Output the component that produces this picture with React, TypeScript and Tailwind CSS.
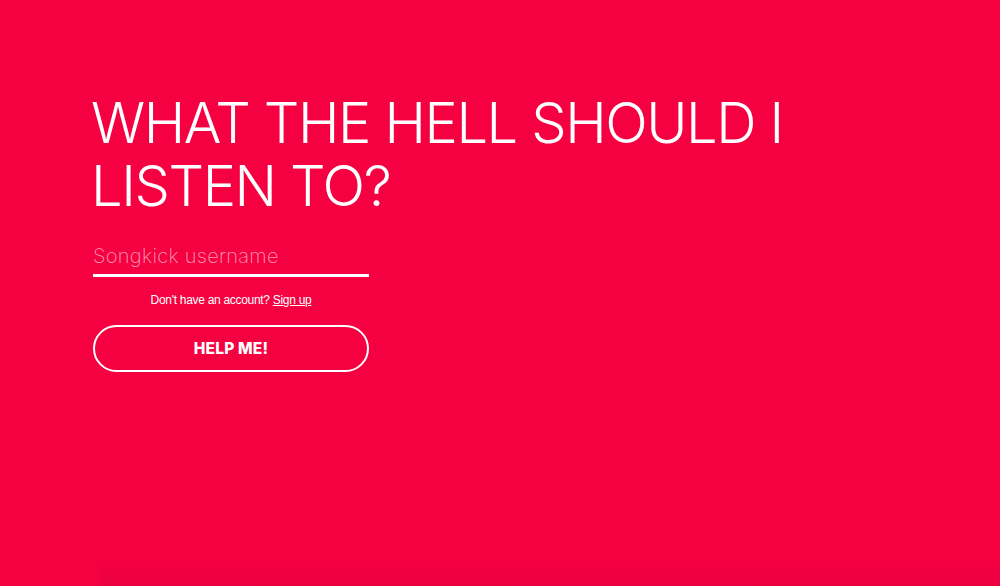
export default function App() {
  return (
    <main className="relative flex h-[586px] w-full flex-col overflow-hidden bg-[#f50041] font-['Inter',sans-serif] text-white">
      <section className="flex flex-col pl-[91px] pt-[92px]">
        <h1 className="text-[56px] font-light leading-[63px] tracking-[-1.4px]">
          WHAT THE HELL SHOULD I<br />
          LISTEN TO?
        </h1>
        <form className="ml-[2px] mt-[23px] flex w-[276px] flex-col" onSubmit={(e) => e.preventDefault()}>
          <input
            type="text"
            placeholder="Songkick username"
            className="h-[36px] w-full border-b-[3px] border-white bg-transparent pb-[4px] text-[20px] font-extralight tracking-[0.3px] text-white outline-none placeholder:text-white/60"
          />
          <p className="mt-[16px] text-center font-['Liberation_Sans',sans-serif] text-[12px] leading-[15px] tracking-[-0.3px]">
            Don't have an account?{" "}
            <a href="#" className="underline">
              Sign up
            </a>
          </p>
          <button
            type="submit"
            className="mt-[17px] h-[47px] w-full rounded-full border-2 border-white text-[15.5px] font-extrabold tracking-[0.2px]"
          >
            HELP ME!
          </button>
        </form>
      </section>
      <div className="mt-auto ml-[100px] h-[26px] bg-gradient-to-b from-transparent to-[#e3003f]/60" />
    </main>
  );
}
